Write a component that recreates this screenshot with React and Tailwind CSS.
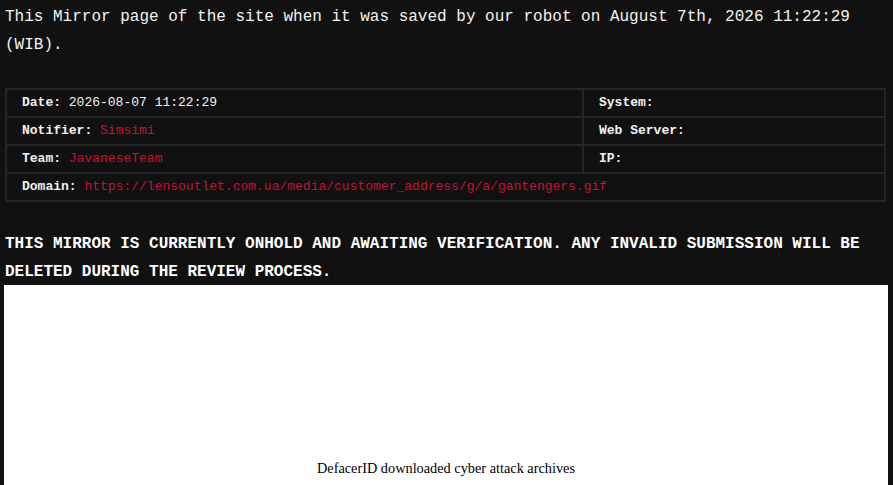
export default function App() {
  const mono = { fontFamily: '"Liberation Mono", "DejaVu Sans Mono", monospace' };
  return (
    <div className="min-h-[485px] bg-[#111111] text-[#f2f2f2] px-[5px] pt-[3px]" style={mono}>
      <p className="text-[16px] leading-[28px]">
        This Mirror page of the site when it was saved by our robot on August 7th, 2026 11:22:29 (WIB).
      </p>

      <table className="mt-[29px] w-[881px] border-collapse border-2 border-[#262626] text-[13px]">
        <tbody>
          <tr className="h-[28px]">
            <td className="border-2 border-[#262626] pl-[15px] w-[577px]">
              <b>Date:</b> 2026-08-07 11:22:29
            </td>
            <td className="border-2 border-[#262626] pl-[15px]">
              <b>System:</b>
            </td>
          </tr>
          <tr className="h-[28px]">
            <td className="border-2 border-[#262626] pl-[15px]">
              <b>Notifier:</b> <span className="text-[#c8102e]">Simsimi</span>
            </td>
            <td className="border-2 border-[#262626] pl-[15px]">
              <b>Web Server:</b>
            </td>
          </tr>
          <tr className="h-[28px]">
            <td className="border-2 border-[#262626] pl-[15px]">
              <b>Team:</b> <span className="text-[#c8102e]">JavaneseTeam</span>
            </td>
            <td className="border-2 border-[#262626] pl-[15px]">
              <b>IP:</b>
            </td>
          </tr>
          <tr className="h-[28px]">
            <td colSpan={2} className="border-2 border-[#262626] pl-[15px]">
              <b>Domain:</b>{' '}
              <span className="text-[#c8102e]">https://lensoutlet.com.ua/media/customer_address/g/a/gantengers.gif</span>
            </td>
          </tr>
        </tbody>
      </table>

      <h2 className="mt-[28px] text-[16px] leading-[28px] font-bold text-white">
        THIS MIRROR IS CURRENTLY ONHOLD AND AWAITING VERIFICATION. ANY INVALID SUBMISSION WILL BE DELETED DURING THE REVIEW PROCESS.
      </h2>

      <div className="-ml-px w-[884px] h-[200px] bg-white -mt-px flex flex-col items-center justify-end pb-[6px]">
        <span
          className="text-[14.3px] text-black"
          style={{ fontFamily: '"Liberation Serif", "Times New Roman", serif' }}
        >
          DefacerID downloaded cyber attack archives
        </span>
      </div>
    </div>
  );
}
